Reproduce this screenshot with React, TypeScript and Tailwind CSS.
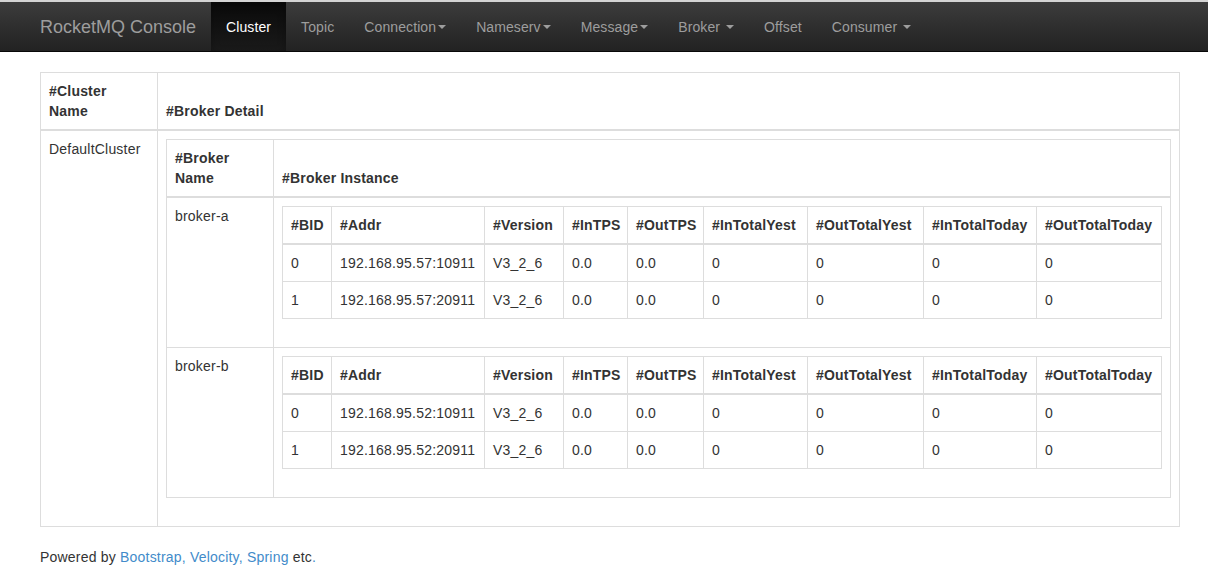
import React from 'react';

type BrokerRow = {
  bid: string;
  addr: string;
  version: string;
  inTps: string;
  outTps: string;
  inTotalYest: string;
  outTotalYest: string;
  inTotalToday: string;
  outTotalToday: string;
};

const brokers: { name: string; rows: BrokerRow[] }[] = [
  {
    name: 'broker-a',
    rows: [
      { bid: '0', addr: '192.168.95.57:10911', version: 'V3_2_6', inTps: '0.0', outTps: '0.0', inTotalYest: '0', outTotalYest: '0', inTotalToday: '0', outTotalToday: '0' },
      { bid: '1', addr: '192.168.95.57:20911', version: 'V3_2_6', inTps: '0.0', outTps: '0.0', inTotalYest: '0', outTotalYest: '0', inTotalToday: '0', outTotalToday: '0' },
    ],
  },
  {
    name: 'broker-b',
    rows: [
      { bid: '0', addr: '192.168.95.52:10911', version: 'V3_2_6', inTps: '0.0', outTps: '0.0', inTotalYest: '0', outTotalYest: '0', inTotalToday: '0', outTotalToday: '0' },
      { bid: '1', addr: '192.168.95.52:20911', version: 'V3_2_6', inTps: '0.0', outTps: '0.0', inTotalYest: '0', outTotalYest: '0', inTotalToday: '0', outTotalToday: '0' },
    ],
  },
];

const navItems = [
  { label: 'Cluster', active: true },
  { label: 'Topic' },
  { label: 'Connection', caret: true },
  { label: 'Nameserv', caret: true },
  { label: 'Message', caret: true },
  { label: 'Broker', caret: true, spaced: true },
  { label: 'Offset' },
  { label: 'Consumer', caret: true, spaced: true },
];

const Caret = () => (
  <span className="inline-block w-0 h-0 ml-[2px] align-middle border-t-[4px] border-t-current border-x-[4px] border-x-transparent" />
);

const th = 'border border-[#ddd] border-b-2 p-2 text-left align-bottom font-bold';
const td = 'border border-[#ddd] p-2 text-left align-top';

const InstanceTable = ({ rows }: { rows: BrokerRow[] }) => (
  <table className="w-full table-fixed border-collapse mb-5">
    <colgroup>
      <col className="w-[49px]" />
      <col className="w-[153px]" />
      <col className="w-[79px]" />
      <col className="w-[64px]" />
      <col className="w-[76px]" />
      <col className="w-[104px]" />
      <col className="w-[116px]" />
      <col className="w-[113px]" />
      <col />
    </colgroup>
    <thead>
      <tr>
        <th className={th}>#BID</th>
        <th className={th}>#Addr</th>
        <th className={th}>#Version</th>
        <th className={th}>#InTPS</th>
        <th className={th}>#OutTPS</th>
        <th className={th}>#InTotalYest</th>
        <th className={th}>#OutTotalYest</th>
        <th className={th}>#InTotalToday</th>
        <th className={th}>#OutTotalToday</th>
      </tr>
    </thead>
    <tbody>
      {rows.map((r) => (
        <tr key={r.addr}>
          <td className={td}>{r.bid}</td>
          <td className={td}>{r.addr}</td>
          <td className={td}>{r.version}</td>
          <td className={td}>{r.inTps}</td>
          <td className={td}>{r.outTps}</td>
          <td className={td}>{r.inTotalYest}</td>
          <td className={td}>{r.outTotalYest}</td>
          <td className={td}>{r.inTotalToday}</td>
          <td className={td}>{r.outTotalToday}</td>
        </tr>
      ))}
    </tbody>
  </table>
);

export default function App() {
  return (
    <div className="min-h-[581px] bg-white text-[14px] leading-[20px] tracking-[0.2px] text-[#333] font-['Liberation_Sans',Arial,sans-serif]">
      {/* Navbar */}
      <nav className="h-[52px] border-t-2 border-t-[#d4d4d4] border-b border-b-[#080808] bg-gradient-to-b from-[#3c3c3c] to-[#222] flex items-stretch px-[25px] mb-5">
        <a className="px-[15px] flex items-center text-[18px] tracking-normal text-[#9d9d9d]">RocketMQ Console</a>
        {navItems.map((item) => (
          <a
            key={item.label}
            className={`px-[15px] flex items-center tracking-[0.1px] ${
              item.active
                ? 'text-white bg-gradient-to-b from-[#0a0a0a] to-[#1a1a1a] shadow-[inset_0_3px_9px_rgba(0,0,0,0.25)]'
                : 'text-[#9d9d9d]'
            }`}
          >
            {item.label}
            {item.caret && (item.spaced ? <span className="ml-[4px] flex"><Caret /></span> : <Caret />)}
          </a>
        ))}
      </nav>

      {/* Content */}
      <div className="pl-10 w-[1180px]">
        <table className="w-full table-fixed border-collapse mb-5">
          <colgroup>
            <col className="w-[117px]" />
            <col />
          </colgroup>
          <thead>
            <tr>
              <th className={th}>
                #Cluster
                <br />
                Name
              </th>
              <th className={th}>#Broker Detail</th>
            </tr>
          </thead>
          <tbody>
            <tr>
              <td className={td}>DefaultCluster</td>
              <td className={td}>
                <table className="w-full table-fixed border-collapse mb-5">
                  <colgroup>
                    <col className="w-[107px]" />
                    <col />
                  </colgroup>
                  <thead>
                    <tr>
                      <th className={th}>
                        #Broker
                        <br />
                        Name
                      </th>
                      <th className={th}>#Broker Instance</th>
                    </tr>
                  </thead>
                  <tbody>
                    {brokers.map((b) => (
                      <tr key={b.name}>
                        <td className={td}>{b.name}</td>
                        <td className={td}>
                          <InstanceTable rows={b.rows} />
                        </td>
                      </tr>
                    ))}
                  </tbody>
                </table>
              </td>
            </tr>
          </tbody>
        </table>

        <p>
          Powered by <a className="text-[#428bca]">Bootstrap</a>
          <span className="text-[#428bca]">, </span>
          <a className="text-[#428bca]">Velocity</a>
          <span className="text-[#428bca]">, </span>
          <a className="text-[#428bca]">Spring</a> etc<span className="text-[#428bca]">.</span>
        </p>
      </div>
    </div>
  );
}
